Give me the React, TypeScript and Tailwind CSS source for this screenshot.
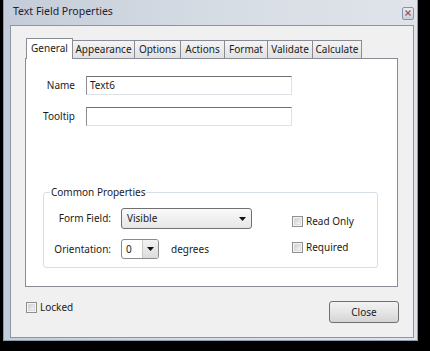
import React from "react";

const font = { fontFamily: '"Noto Sans", "Open Sans", sans-serif' };

function Checkbox() {
  return (
    <div className="w-[11px] h-[11px] border border-[#8e8f8f] bg-[#f4f4f4] p-px shrink-0">
      <div className="w-full h-full bg-gradient-to-br from-[#cbcfd5] to-[#f6f6f6] border border-[#dcdcdc]" />
    </div>
  );
}

function Arrow() {
  return (
    <svg width="7" height="4" viewBox="0 0 7 4">
      <path d="M0 0 L7 0 L3.5 4 Z" fill="#111" />
    </svg>
  );
}

const tabs: [string, number][] = [
  ["General", 47],
  ["Appearance", 63],
  ["Options", 47],
  ["Actions", 45],
  ["Format", 44],
  ["Validate", 46],
  ["Calculate", 50],
];

export default function App() {
  return (
    <div className="w-[430px] h-[351px] bg-black overflow-hidden text-[10px] text-[#1b1b1b]" style={font}>
      <div className="ml-[3px] w-[415px] h-[341px] flex flex-col bg-gradient-to-r from-[#c3ccd8] via-[#d6dce4] to-[#e0e4ea] border-l border-r border-b border-[#8f9cb0] pr-[3px] pl-[6px] pb-[2px]">
        {/* title bar */}
        <div className="h-[25px] flex items-center justify-between shrink-0">
          <span className="pl-[3px] -mt-[2px] text-[10.5px] text-[#1c2230]">Text Field Properties</span>
          <div className="w-[12px] h-[13px] mt-[1px] border border-[#8794a7] rounded-[2px] bg-gradient-to-b from-[#e8ebf0] to-[#c9d0da] flex items-center justify-center">
            <svg width="6" height="6" viewBox="0 0 6 6">
              <path d="M0.5 0.5 L5.5 5.5 M5.5 0.5 L0.5 5.5" stroke="#a0585e" strokeWidth="1.3" />
            </svg>
          </div>
        </div>
        {/* client area */}
        <div className="flex-1 bg-[#f0f0f0] border border-[#8a96a6] flex flex-col">
          {/* tabs */}
          <div className="flex items-end pl-[15px] pt-[12px]">
            {tabs.map(([t, w], i) =>
              i === 0 ? (
                <div
                  key={t}
                  style={{ width: w }}
                  className="relative z-10 h-[21px] -mb-px bg-white border border-b-0 border-[#898c95] flex items-center justify-center pb-[2px]"
                >
                  {t}
                </div>
              ) : (
                <div
                  key={t}
                  style={{ width: w }}
                  className="h-[18px] -ml-px bg-gradient-to-b from-[#f4f4f4] to-[#e1e1e1] border border-b-0 border-[#898c95] flex items-center justify-center"
                >
                  {t}
                </div>
              )
            )}
          </div>
          {/* panel */}
          <div className="ml-[14px] w-[373px] h-[229px] bg-white border border-[#898c95] flex flex-col">
            <div className="grid grid-cols-[50px_206px] gap-x-[10px] gap-y-[12px] mt-[17px] items-center">
              <div className="text-right pr-[1px]">Name</div>
              <div className="h-[19px] border border-[#dfe3e8] border-t-[#6f6f6f] border-l-[#8d8d8d] bg-white flex items-center pl-[3px]">Text6</div>
              <div className="text-right pr-[1px]">Tooltip</div>
              <div className="h-[19px] border border-[#dfe3e8] border-t-[#6f6f6f] border-l-[#8d8d8d] bg-white" />
            </div>
            {/* group box */}
            <div className="relative ml-[17px] mt-[66px] w-[335px] h-[76px] border border-[#d5dfe5] rounded-[3px] flex">
              <div className="absolute -top-[8px] left-[6px] bg-white px-[1px]">Common Properties</div>
              <div className="w-[248px] flex flex-col pt-[15px]">
                <div className="flex items-center">
                  <div className="w-[67px] text-right">Form Field:</div>
                  <div className="ml-[10px] w-[131px] h-[21px] rounded-[3px] border border-[#707070] bg-gradient-to-b from-[#fafafa] to-[#e6e6e6] flex items-center justify-between pl-[5px] pr-[5px]">
                    <span>Visible</span>
                    <Arrow />
                  </div>
                </div>
                <div className="flex items-center mt-[10px]">
                  <div className="w-[67px] text-right">Orientation:</div>
                  <div className="ml-[10px] w-[38px] h-[20px] rounded-[3px] border border-[#8a8a8a] bg-white flex items-stretch overflow-hidden">
                    <span className="flex-1 pl-[4px] flex items-center">0</span>
                    <span className="w-[16px] bg-gradient-to-b from-[#f3f3f3] to-[#dcdcdc] border-l border-[#c8c8c8] flex items-center justify-center">
                      <Arrow />
                    </span>
                  </div>
                  <span className="ml-[12px]">degrees</span>
                </div>
              </div>
              <div className="flex flex-col pt-[23px] gap-[15px]">
                <div className="flex items-center gap-[3px] h-[11px]">
                  <Checkbox />
                  <span>Read Only</span>
                </div>
                <div className="flex items-center gap-[3px] h-[11px]">
                  <Checkbox />
                  <span>Required</span>
                </div>
              </div>
            </div>
          </div>
          {/* bottom */}
          <div className="ml-[15px] w-[373px] mt-[14px] flex items-start justify-between">
            <div className="flex items-center gap-[3px] mt-[1px] h-[11px]">
              <Checkbox />
              <span>Locked</span>
            </div>
            <button className="w-[70px] h-[22px] rounded-[3px] border border-[#707070] bg-gradient-to-b from-[#f2f2f2] via-[#e6e6e6] to-[#d4d4d4] text-[10px] text-[#1b1b1b] flex items-center justify-center" style={font}>
              Close
            </button>
          </div>
        </div>
      </div>
    </div>
  );
}
